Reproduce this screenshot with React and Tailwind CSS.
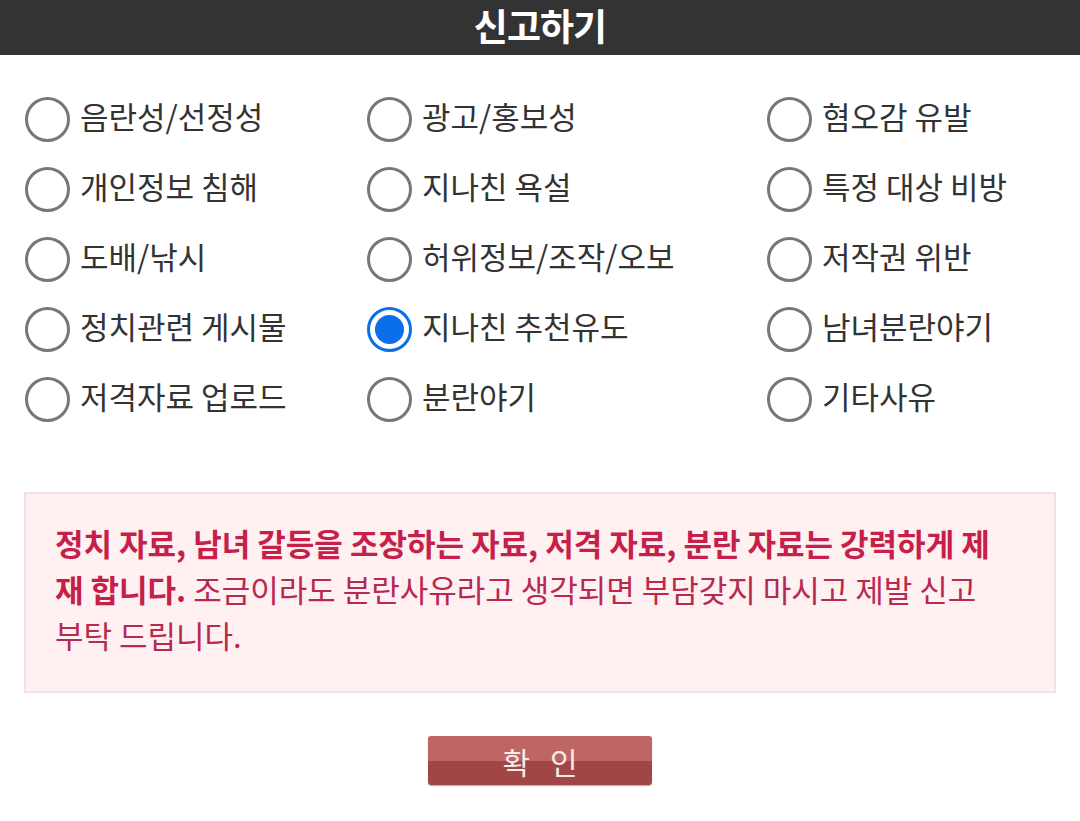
import React, { useState } from "react";

const reasons = [
    "음란성/선정성",
    "광고/홍보성",
    "혐오감 유발",
    "개인정보 침해",
    "지나친 욕설",
    "특정 대상 비방",
    "도배/낚시",
    "허위정보/조작/오보",
    "저작권 위반",
    "정치관련 게시물",
    "지나친 추천유도",
    "남녀분란야기",
    "저격자료 업로드",
    "분란야기",
    "기타사유",
];

const font = { fontFamily: '"Noto Sans CJK KR", "Noto Sans", sans-serif' };

const Radio = ({ checked }) =>
    checked ? (
        <span className="flex h-[45px] w-[45px] shrink-0 items-center justify-center rounded-full border-[3px] border-[#0a6fe8] bg-white">
            <span className="h-[29px] w-[29px] rounded-full bg-[#0a6fe8]" />
        </span>
    ) : (
        <span className="h-[45px] w-[45px] shrink-0 rounded-full border-[3px] border-[#777777] bg-white" />
    );

export default function App() {
    const [selected, setSelected] = useState("지나친 추천유도");

    return (
        <div className="flex min-h-[821px] w-full flex-col bg-white" style={font}>
            {/* Header */}
            <header className="flex h-[55px] items-center justify-center bg-[#333333]">
                <h1 className="-mt-[4px] text-[37px] font-bold leading-none tracking-tight text-white">신고하기</h1>
            </header>

            {/* Reasons */}
            <div className="mt-[29px] grid grid-cols-[342px_400px_1fr] pl-[25px]">
                {reasons.map((r) => (
                    <label
                        key={r}
                        onClick={() => setSelected(r)}
                        className="flex h-[70px] cursor-pointer items-center gap-[10px]"
                    >
                        <Radio checked={selected === r} />
                        <span className="-mt-[8px] whitespace-nowrap text-[31px] leading-none text-[#333333]">{r}</span>
                    </label>
                ))}
            </div>

            {/* Notice */}
            <div className="mx-[24px] mt-[58px] h-[201px] border-2 border-[#f2e1e5] bg-[#fff0f2] px-[29px] pt-[26px] text-[31px] leading-[46px] text-[#b8294f]">
                <p className="whitespace-nowrap">
                    <b className="font-bold text-[#c51f4a]">정치 자료, 남녀 갈등을 조장하는 자료, 저격 자료, 분란 자료는 강력하게 제</b>
                    <br />
                    <b className="font-bold text-[#c51f4a]">재 합니다.</b> 조금이라도 분란사유라고 생각되면 부담갖지 마시고 제발 신고
                    <br />
                    부탁 드립니다.
                </p>
            </div>

            {/* Confirm */}
            <div className="mt-[43px] flex justify-center">
                <button className="relative flex h-[49px] w-[224px] items-center justify-center overflow-hidden rounded-[3px] bg-[linear-gradient(#be6664_0%,#be6664_52%,#a24545_52%,#a24545_100%)] shadow-[0_1px_1px_rgba(0,0,0,0.3)]">
                    <span className="pl-[20px] text-[30px] leading-none tracking-[20px] text-[#f6eaea]">확인</span>
                </button>
            </div>
        </div>
    );
}
